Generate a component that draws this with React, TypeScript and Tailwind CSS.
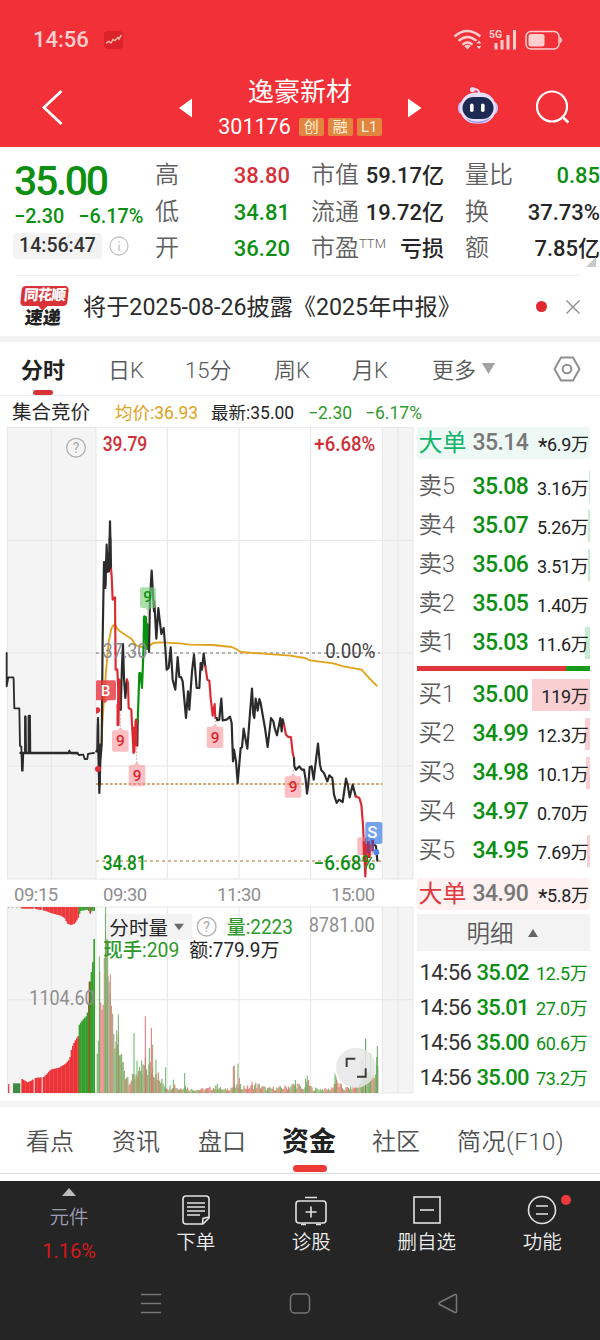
import cn from 'clsx';
import { ReactNode } from 'react';

const quotes = [
  [
    { label: '高', value: '38.80', color: 'text-[#d5303a]' },
    { label: '低', value: '34.81', color: 'text-[#0c8f12]' },
    { label: '开', value: '36.20', color: 'text-[#0c8f12]' },
  ],
  [
    { label: '市值', value: '59.17亿', color: 'text-[#262626]' },
    { label: '流通', value: '19.72亿', color: 'text-[#262626]' },
    { label: '市盈', sup: 'TTM', value: '亏损', color: 'text-[#262626]' },
  ],
  [
    { label: '量比', value: '0.85', color: 'text-[#0c8f12]' },
    { label: '换', value: '37.73%', color: 'text-[#262626]' },
    { label: '额', value: '7.85亿', color: 'text-[#262626]' },
  ],
];

const quoteWidths = ['w-[135px]', 'w-[133px]', 'w-[135px]'];

const sells = [
  { label: '卖5', price: '35.08', amount: '3.16万', bar: 1 },
  { label: '卖4', price: '35.07', amount: '5.26万', bar: 2 },
  { label: '卖3', price: '35.06', amount: '3.51万', bar: 2 },
  { label: '卖2', price: '35.05', amount: '1.40万', bar: 0 },
  { label: '卖1', price: '35.03', amount: '11.6万', bar: 5 },
];

const buys = [
  { label: '买1', price: '35.00', amount: '119万', bar: 58 },
  { label: '买2', price: '34.99', amount: '12.3万', bar: 5 },
  { label: '买3', price: '34.98', amount: '10.1万', bar: 4 },
  { label: '买4', price: '34.97', amount: '0.70万', bar: 0 },
  { label: '买5', price: '34.95', amount: '7.69万', bar: 3 },
];

const ticks = [
  { time: '14:56', price: '35.02', amount: '12.5万' },
  { time: '14:56', price: '35.01', amount: '27.0万' },
  { time: '14:56', price: '35.00', amount: '60.6万' },
  { time: '14:56', price: '35.00', amount: '73.2万' },
];

// chart paths use three units per pixel
const BLACK = '#2b2b2b';
const RED = '#dc2a32';
const GREEN = '#0a920f';

const priceLines = [
  {
    color: BLACK,
    points:
      '289,980 292,975 294,880 295,985 298,1105 301,1010 305,960 308,640 312,412 316,490 320,360 323,440 327,440 330,290 333,430',
  },
  {
    color: RED,
    points:
      '333,430 335,455 338,525 345,518 347,735 352,735 355,800 354,900 358,765 360,770 362,855',
  },
  { color: BLACK, points: '362,855 366,720 369,658 372,760 376,820 381,765' },
  {
    color: RED,
    points:
      '381,765 384,775 386,850 394,855 396,900 401,985 405,930 408,885 410,963 412,963',
  },
  { color: BLACK, points: '412,960 413,885' },
  {
    color: GREEN,
    points: '413,895 418,745 421,745 426,790 430,690 433,575 437,578',
  },
  {
    color: BLACK,
    points:
      '447,682 450,520 455,438 462,560 463,530 469,642 475,550 484,628 491,610 496,670 500,735 506,730 512,668 518,765 526,795 533,697 538,757 543,757 548,770 558,880 564,800 568,855 576,740 582,690 590,790 598,790 602,715 606,735 611,687 616,725',
  },
  {
    color: RED,
    points:
      '616,725 622,765 628,768 632,820 638,873 644,838 646,880 650,880',
  },
  {
    color: BLACK,
    points:
      '650,880 652,887 658,885 660,860 664,822 668,887 680,885 690,876 695,895 699,1010 702,975 708,1010 713,1075 722,970 726,968 731,912 736,940 742,972 750,865 756,792 760,870 763,880 767,822 773,858 778,823 782,835 787,865 795,910 803,967 813,880 820,890 824,910 831,932 841,880 845,920 848,884 852,900',
  },
  {
    color: RED,
    points: '852,900 858,930 864,936 873,938 878,985 882,1000',
  },
  {
    color: BLACK,
    points:
      '882,1000 883,1025 888,1035 898,1025 905,1035 912,1035 917,1065 921,1107 925,1080 929,1027 935,1025 941,1065 948,1005 954,957 960,1020 964,1037 972,1045 977,1058 982,1070 988,1052 997,1060 1002,1110 1010,1135 1017,1125 1028,1132 1034,1090 1038,1062 1043,1080 1049,1118 1058,1080 1067,1115',
  },
  {
    color: RED,
    points:
      '1067,1115 1078,1120 1084,1140 1089,1200 1093,1290 1096,1355 1099,1280 1101,1240',
  },
  {
    color: BLACK,
    points:
      '1101,1245 1104,1270 1107,1295 1111,1260 1116,1238 1121,1258 1128,1265 1132,1308',
  },
];

const averageLine =
  '303,980 310,850 318,740 325,660 334,612 340,602 345,600 352,612 360,620 380,633 395,643 402,655 410,663 430,668 447,665 460,655 480,653 540,656 570,660 640,661 695,667 708,673 722,682 780,686 870,693 915,700 930,707 1000,716 1030,725 1085,735 1100,752 1115,768 1132,785';

const auctionLine =
  '20,685 20,785 25,758 40,758 41,766 43,851 58,851 60,964 64,966 66,1038 68,1038 70,985 76,985 76,875 78,985 86,985 86,873 90,873 91,985 205,985 208,978 212,985 232,986 237,991 250,990 254,1003 262,1003 264,988 272,986 282,985';

// [x, height] knots of the auction volume area
const auctionKnots: [number, number][] = [
  [64, 42], [80, 32], [90, 36], [103, 45], [130, 48], [150, 70], [175, 76],
  [195, 88], [207, 102], [213, 135], [222, 155], [235, 175], [236, 205],
  [245, 218], [256, 230], [263, 250], [268, 335], [273, 370], [277, 400],
  [280, 462],
];

const hangingKnots: [number, number][] = [
  [64, 5], [100, 5], [135, 12], [150, 18], [180, 26], [192, 34], [200, 50],
  [210, 54], [222, 50], [234, 30], [238, 12], [262, 8], [268, 20], [274, 10],
  [280, 12],
];

const volumeKnots: [number, number][] = [
  [290, 118], [293, 125], [297, 366], [301, 260], [307, 240], [311, 400],
  [314, 530], [317, 558], [320, 360], [326, 330], [331, 270], [337, 230],
  [341, 138], [346, 125], [350, 185], [356, 180], [359, 110], [366, 100],
  [374, 75], [382, 55], [395, 45], [410, 80], [420, 55], [430, 90],
  [445, 85], [460, 85], [468, 80], [476, 42], [490, 32], [503, 16],
  [520, 30], [535, 12], [552, 26], [566, 12], [610, 12], [650, 20],
  [670, 10], [695, 20], [720, 22], [745, 18], [765, 28], [800, 14],
  [850, 18], [890, 30], [905, 12], [922, 34], [935, 14], [990, 12],
  [1005, 38], [1030, 14], [1075, 24], [1090, 50], [1125, 72], [1132, 110],
];

const spikes: [number, number, string][] = [
  [298, 410, '#67b562'],
  [317, 558, '#67b562'],
  [323, 500, '#67b562'],
  [331, 355, '#dd8273'],
  [355, 236, '#79ad6b'],
  [350, 188, '#79ad6b'],
  [365, 118, '#79ad6b'],
  [402, 180, '#67b562'],
  [411, 97, '#67b562'],
  [425, 98, '#67b562'],
  [436, 230, '#dd6f75'],
  [448, 135, '#67b562'],
  [454, 195, '#dd6f75'],
  [458, 145, '#a99a73'],
  [468, 100, '#67b562'],
  [497, 77, '#67b562'],
  [520, 40, '#67b562'],
  [554, 60, '#67b562'],
  [652, 28, '#67b562'],
  [700, 80, '#bd8b6d'],
  [703, 82, '#bd8b6d'],
  [714, 88, '#79ad6b'],
  [718, 46, '#dd8273'],
  [756, 34, '#dd8273'],
  [886, 39, '#67b562'],
  [917, 44, '#67b562'],
  [922, 52, '#79ad6b'],
  [1005, 58, '#67b562'],
  [1008, 50, '#67b562'],
  [1086, 100, '#67b562'],
  [1097, 163, '#4f9a4f'],
  [1112, 118, '#67b562'],
  [1130, 108, '#67b562'],
  [1132, 141, '#67a562'],
];

function heightAt(knots: [number, number][], x: number) {
  for (let i = 1; i < knots.length; i++) {
    const [x0, h0] = knots[i - 1];
    const [x1, h1] = knots[i];
    if (x <= x1) return h0 + ((h1 - h0) * (x - x0)) / (x1 - x0);
  }
  return knots[knots.length - 1][1];
}

// small repeatable noise so that neighbouring bars differ
function noise(i: number) {
  const n = Math.sin(i * 12.9898) * 43758.5453;
  return n - Math.floor(n);
}

function volumeColor(x: number, n: number) {
  if (x < 300) return n > 0.5 ? '#8fbb7c' : '#c59a80';
  if (x < 311) return '#e88683';
  if (x < 342) return '#b3a587';
  if (n > 0.66) return '#e0867c';
  return n > 0.3 ? '#85b772' : '#b79a76';
}

const volumeBars = Array.from({ length: 240 }, (_, i) => {
  const x = 290 + i * 3.52;
  const rough = x < 345 ? 1 : 0.45 + noise(i) * 0.8;
  return {
    x,
    height: heightAt(volumeKnots, x) * rough,
    color: volumeColor(x, noise(i + 500)),
  };
});

const auctionBars = Array.from({ length: 55 }, (_, i) => 64 + i * 4).filter(
  x => x !== 100 && x !== 124,
);

function Grid({ top, bottom, rows }: { top: number; bottom: number; rows: number[] }) {
  return (
    <>
      <rect x="22" y={top} width="266" height={bottom - top} fill="#f4f4f4" />
      <rect x="1147" y={top} width="92" height={bottom - top} fill="#f4f4f4" />
      <g stroke="#e6e6e6" strokeWidth="3">
        {rows.map(y => (
          <path key={y} d={`M22 ${y}H1239`} />
        ))}
        {[22, 154, 288, 502, 717, 932, 1147, 1194, 1239].map(x => (
          <path key={x} d={`M${x} ${top}V${bottom}`} />
        ))}
      </g>
    </>
  );
}

interface LabelProps {
  x: number;
  y: number;
  width: number;
  fill: string;
  weight?: number;
  children: ReactNode;
}

function Label({ x, y, width, fill, weight = 500, children }: LabelProps) {
  return (
    <text
      x={x}
      y={y}
      fontSize="58"
      fontWeight={weight}
      fill={fill}
      textLength={width}
      lengthAdjust="spacingAndGlyphs">
      {children}
    </text>
  );
}

function Nine({ x, y }: { x: number; y: number }) {
  return (
    <g>
      <path
        d={`M${x - 19} ${y - 30}h10l9 -9l9 9h10q6 0 6 6v52q0 6 -6 6h-38q-6 0 -6 -6v-52q0 -6 6 -6z`}
        fill="#f5828a"
        fillOpacity="0.5"
      />
      <text
        x={x}
        y={y + 18}
        fontSize="46"
        fontWeight="500"
        textAnchor="middle"
        fill="#d9252f">
        9
      </text>
    </g>
  );
}

function Help({ x, y }: { x: number; y: number }) {
  return (
    <g>
      <circle cx={x} cy={y} r="28" fill="none" stroke="#b4b4b4" strokeWidth="4" />
      <text x={x} y={y + 15} fontSize="42" textAnchor="middle" fill="#a8a8a8">
        ?
      </text>
    </g>
  );
}

function PriceChart() {
  return (
    <svg width="414" height="454" viewBox="0 7 1242 1362" className="block">
      <Grid top={7} bottom={1363} rows={[8, 347, 685, 1024, 1363]} />
      <path d="M288 685H1140" stroke="#77737f" strokeWidth="3" strokeDasharray="9 9" />
      <path d="M288 1078H1147" stroke="#c08a3a" strokeWidth="4" strokeDasharray="8 6" />
      <path d="M288 1309H1147" stroke="#c5a276" strokeWidth="4" strokeDasharray="9 9" />
      <polyline
        points={averageLine}
        fill="none"
        stroke="#e2a21a"
        strokeWidth="5.5"
        strokeLinejoin="round"
      />
      <g strokeWidth="6.5" fill="none" strokeLinejoin="round" strokeLinecap="round">
        <polyline points={auctionLine} stroke={BLACK} strokeWidth="5.5" />
        <path d="M62 985H206M212 985H232" stroke={BLACK} strokeWidth="8" />
        <path d="M76 876V980M87 875V980" stroke={BLACK} strokeWidth="7" />
        <path d="M435 580V640M440 600V670" stroke={GREEN} strokeWidth="13" />
        {priceLines.map(line => (
          <polyline key={line.points} points={line.points} stroke={line.color} />
        ))}
        <path d="M322 385V440M315 415V480" stroke={BLACK} strokeWidth="9" />
        <path d="M330 340V430" stroke={BLACK} strokeWidth="8" />
        <path d="M294 900V980M299 960V1080" stroke={BLACK} strokeWidth="7" />
        <path d="M357 768V850M354 840V900M408 890V960M402 910V980" stroke={RED} strokeWidth="9" />
      </g>
      <Label x={308} y={700} width={134} fill="#8c8c8c" weight={400}>37.30</Label>
      <path
        d="M292 767h50q6 0 6 6v48q0 6 -6 6h-18l-9 9l-9 -9h-18v-54q0 -6 4 -6z"
        fill="#e5373f"
        fillOpacity="0.82"
      />
      <text x="317" y="813" fontSize="46" fontWeight="500" textAnchor="middle" fill="#fff">
        B
      </text>
      <path d="M288 849c8 -3 14 2 13 10q-4 8 -13 8z" fill="#e03038" />
      <circle cx="294" cy="1033" r="9" fill="#e03038" />
      <path
        d="M426 488h36q6 0 6 6v50q0 6 -6 6h-10l-8 10l-8 -10h-10q-6 0 -6 -6v-50q0 -6 6 -6z"
        fill="#7ccf80"
        fillOpacity="0.65"
      />
      <text x="443" y="533" fontSize="46" fontWeight="500" textAnchor="middle" fill="#0a920f">
        9
      </text>
      <path
        d="M361 870V912M410 970V1016M444 562V600M646 888V900M880 1035V1046"
        stroke="#d99aa0"
        strokeWidth="3"
        strokeDasharray="5 5"
      />
      <Nine x={361} y={947} />
      <Nine x={411} y={1051} />
      <Nine x={645} y={936} />
      <Nine x={879} y={1085} />
      <rect x="1072" y="1238" width="48" height="54" rx="6" fill="#f5828a" fillOpacity="0.55" />
      <path d="M1092 1250V1290M1099 1240V1320M1108 1256V1300" stroke={RED} strokeWidth="8" />
      <path
        d="M1102 1192h39q6 0 6 6v54q0 6 -6 6h-14l-10 9l-9 -9h-12v-60q0 -6 6 -6z"
        fill="#5b93ea"
        fillOpacity="0.85"
      />
      <path d="M1118 1246V1280M1105 1250V1285" stroke="#7a3f86" strokeWidth="8" />
      <text x="1117" y="1240" fontSize="50" fontWeight="500" textAnchor="middle" fill="#fff">
        S
      </text>
      <circle cx="1129" cy="1283" r="9" fill="#4f86e8" />
      <Help x={228} y={69} />
      <Label x={308} y={79} width={134} fill="#cf3038">39.79</Label>
      <Label x={943} y={79} width={183} fill="#cf3038">+6.68%</Label>
      <Label x={976} y={700} width={150} fill="#444" weight={400}>0.00%</Label>
      <Label x={308} y={1336} width={132} fill="#0c8f12">34.81</Label>
      <Label x={941} y={1336} width={185} fill="#0c8f12">−6.68%</Label>
    </svg>
  );
}

function VolumeChart() {
  return (
    <svg width="414" height="188" viewBox="0 77 1242 564" className="block">
      <Grid top={80} bottom={638} rows={[80, 358, 638]} />
      <path d="M24 82H64" stroke="#b9b9b9" strokeWidth="4" strokeDasharray="4 8" />
      {auctionBars.map(x => (
        <rect
          key={`TOP-${x}`}
          x={x}
          y="80"
          width="5"
          height={heightAt(hangingKnots, x)}
          fill={x < 236 || x === 268 ? '#ee3a3e' : '#3aa536'}
        />
      ))}
      <rect x="24" y="611" width="4" height="27" fill="#e8474a" />
      <rect x="39" y="609" width="22" height="29" fill="#3f8a45" />
      {auctionBars.map(x => (
        <rect
          key={`AUCTION-${x}`}
          x={x}
          y={638 - heightAt(auctionKnots, x)}
          width="5"
          height={heightAt(auctionKnots, x)}
          fill={x < 235 ? '#ec3339' : '#36a02c'}
        />
      ))}
      <path d="M268 304V638" stroke="#a0522d" strokeWidth="4" />
      <Label x={88} y={375} width={196} fill="#8f8f8f" weight={400}>1104.60</Label>
      {volumeBars.map(bar => (
        <rect
          key={bar.x}
          x={bar.x}
          y={638 - bar.height}
          width="3.9"
          height={bar.height}
          fill={bar.color}
        />
      ))}
      {spikes.map(([x, height, color]) => (
        <rect
          key={`SPIKE-${x}`}
          x={x - 1.5}
          y={638 - height}
          width="3"
          height={height}
          fill={color}
        />
      ))}
      <rect x="318" y="100" width="259" height="78" rx="6" fill="#f2f2f2" fillOpacity="0.92" />
      <Label x={328} y={164} width={176} fill="#262626" weight={400}>分时量</Label>
      <path d="M522 130H552L537 150Z" fill="#6a6a6a" />
      <Help x={620} y={139} />
      <Label x={680} y={162} width={199} fill="#2f9a2b" weight={450}>量:2223</Label>
      <Label x={310} y={229} width={228} fill="#2f9a2b" weight={450}>现手:209</Label>
      <Label x={568} y={229} width={270} fill="#262626" weight={400}>额:779.9万</Label>
      <Label x={926} y={154} width={198} fill="#8f8f8f" weight={400}>8781.00</Label>
      <circle cx="1068" cy="562" r="60" fill="#e6e6e6" fillOpacity="0.85" />
      <path d="M1040 560V535H1066M1097 564V589H1071" fill="none" stroke="#3c3c3c" strokeWidth="6" />
    </svg>
  );
}

function StatusBar() {
  return (
    <div className="flex h-[72px] items-center pt-[7px] pl-[33px] text-[#ffcfd0]">
      <span className="w-[71px] text-[22px] font-medium">14:56</span>
      <svg width="20" height="20" viewBox="0 0 20 20">
        <rect width="19" height="18" rx="4" y="1" fill="#da232a" />
        <path
          d="M2 13L5 11.500L7 13L9 9.500L11 10.500L14 7.500L15 9L17.500 5"
          fill="none"
          stroke="#f5b0a2"
          strokeWidth="1.500"
        />
      </svg>
      <svg width="114" height="24" viewBox="0 0 114 24" className="ml-[328px]">
        <g fill="none" stroke="#ffcfd0" strokeWidth="2.400">
          <path d="M2.500 8.500Q15 -2.500 28.500 8.500" />
          <path d="M6.500 12.800Q15.500 5 24.500 12.800" />
          <path d="M10.500 16.600Q15.500 12.500 20.500 16.600" />
        </g>
        <path d="M12.300 18Q15.500 15.500 18.700 18L15.500 21.500Z" fill="#ffcfd0" />
        <path d="M24.500 15.500L27 12.500L29.500 15.500ZM24.500 18L27 21L29.500 18Z" fill="#ffcfd0" />
        <text x="37" y="9.500" fontSize="10.500" fontWeight="700" fill="#ffcfd0">5G</text>
        <path d="M44 21.500V15M50 21.500V12M56 21.500V7M62.500 21.500V2" stroke="#ffcfd0" strokeWidth="3" />
        <rect x="74" y="3.500" width="33" height="17.500" rx="5" fill="none" stroke="#ffcfd0" strokeWidth="1.500" />
        <rect x="76.500" y="6" width="16" height="12.500" rx="2.500" fill="#ffcfd0" />
        <path d="M108.500 9.500Q110.500 12 108.500 15Z" fill="#ffcfd0" stroke="#ffcfd0" />
      </svg>
    </div>
  );
}

function Robot() {
  return (
    <svg width="42" height="42" viewBox="0 0 42 42">
      <path d="M15 5Q22 2 22.500 10" fill="none" stroke="#f3e6fb" strokeWidth="2" />
      <circle cx="15.500" cy="4.500" r="2.600" fill="#f0d8f0" />
      <ellipse cx="4.500" cy="23" rx="3.500" ry="6" fill="#c9c3f5" />
      <ellipse cx="37.500" cy="23" rx="3.500" ry="6" fill="#c9c3f5" />
      <rect x="3" y="7.500" width="36" height="31" rx="15.500" fill="#e9defa" />
      <path d="M8 32Q20 41 34 32Q30 38.500 21 38.500Q12 38.500 8 32Z" fill="#a9a2ee" />
      <rect x="5.500" y="12" width="31" height="22" rx="11" fill="#1e2a52" />
      <rect x="13" y="18.500" width="3.600" height="8.500" rx="1.800" fill="#fff" />
      <rect x="24" y="18.500" width="3.600" height="8.500" rx="1.800" fill="#fff" />
    </svg>
  );
}

function Header() {
  return (
    <div className="flex h-[75px] items-center text-white">
      <svg width="24" height="40" viewBox="0 0 24 40" className="-mt-2 ml-[41px]">
        <path d="M20.500 5L3 21.500L20.500 38" fill="none" stroke="#fff" strokeWidth="2.800" />
      </svg>
      <svg width="14" height="20" viewBox="0 0 14 20" className="-mt-1 ml-[113px]">
        <path d="M14 0.500V19.500L1 10Z" fill="#fff" />
      </svg>
      <div className="ml-[26px] flex w-[164px] flex-col items-center">
        <h1 className="text-[26px] leading-[34px]">逸豪新材</h1>
        <div className="mt-px flex items-center">
          <span className="mr-2 text-[21.500px] leading-[34px] font-[450]">301176</span>
          <div className="flex gap-1 text-[15px] leading-[18px]">
            {['创', '融', 'L1'].map(tag => (
              <span
                key={tag}
                className="h-[18px] w-[25px] rounded-xs bg-[#e2863f] text-center text-[#fff3dc]">
                {tag}
              </span>
            ))}
          </div>
        </div>
      </div>
      <svg width="14" height="20" viewBox="0 0 14 20" className="-mt-1 ml-[26px]">
        <path d="M0 0.500V19.500L13.500 10Z" fill="#fff" />
      </svg>
      <div className="-mt-2 ml-[35px]">
        <Robot />
      </div>
      <svg width="36" height="36" viewBox="0 0 36 36" className="-mt-1 ml-9">
        <circle cx="17" cy="16.500" r="15" fill="none" stroke="#fff" strokeWidth="2.200" />
        <path d="M27 26.500L33.500 32.500" stroke="#fff" strokeWidth="2.600" />
      </svg>
    </div>
  );
}

function Quote() {
  return (
    <div className="flex h-32">
      <div className="w-[155px] pl-3.5 text-[#0c8f12]">
        <div className="mt-[9px] h-[50px] text-[41px] leading-[50px] font-medium tracking-[-2.400px]">
          35.00
        </div>
        <div className="flex h-[23px] gap-[14px] text-[19.800px] leading-[22px] font-medium whitespace-nowrap">
          <span>−2.30</span>
          <span>−6.17%</span>
        </div>
        <div className="mt-1 -ml-px flex items-center">
          <span className="h-[26px] w-[89px] rounded-sm bg-[#f3f3f3] text-center text-[19.500px] leading-[26px] font-medium text-[#333]">
            14:56:47
          </span>
          <svg width="20" height="20" viewBox="0 0 20 20" className="ml-[7px]">
            <circle cx="10" cy="10" r="9" fill="none" stroke="#c4c4c4" strokeWidth="1.300" />
            <path d="M10 8.500V15M10 5.200V6.800" stroke="#c4c4c4" strokeWidth="1.400" />
          </svg>
        </div>
      </div>
      {quotes.map((column, i) => (
        <div
          key={column[0].label}
          className={cn('flex flex-col pt-[10px]', quoteWidths[i], i === 1 && 'mx-[21px]')}>
          {column.map(item => (
            <div
              key={item.label}
              className="flex h-[36.500px] items-center justify-between whitespace-nowrap">
              <span className="text-[24px] font-[350] text-[#5f5f5f]">
                {item.label}
                {item.sup && <sup className="top-[-0.600em] text-[13px]">{item.sup}</sup>}
              </span>
              <span className={cn('pt-px text-[22px] font-medium', item.color)}>{item.value}</span>
            </div>
          ))}
        </div>
      ))}
    </div>
  );
}

function Notice() {
  return (
    <div className="flex h-[61px] items-center">
      <div className="ml-[21px] w-12">
        <div className="relative h-[20px] w-[47px] -skew-x-6 rounded-sm bg-[#d9333a] text-center text-[14.500px] leading-[20px] font-black tracking-[-0.800px] text-white">
          同花顺
          <i className="absolute -bottom-[3px] left-[19px] size-2 rotate-45 bg-[#d9333a]" />
        </div>
        <div className="mt-0.5 -skew-x-6 pr-1 text-center text-[18px] leading-5 font-black text-[#222]">
          速递
        </div>
      </div>
      <p className="mt-0.5 ml-[14px] w-[453px] text-[23.200px] font-[380] whitespace-nowrap text-[#2b2b2b]">
        将于2025-08-26披露《2025年中报》
      </p>
      <span className="size-[11px] rounded-full bg-[#e0282e]" />
      <svg width="14" height="14" viewBox="0 0 14 14" className="ml-[19px]">
        <path d="M0.500 0.500L13.500 13.500M13.500 0.500L0.500 13.500" stroke="#8d8d8d" strokeWidth="1.400" />
      </svg>
    </div>
  );
}

function PeriodTabs() {
  return (
    <div className="flex h-[54px] items-center border-b border-[#ededed] pt-[3px] text-[22px] font-[350] whitespace-nowrap text-[#5a5a5a]">
      <div className="relative ml-[21px] w-[87px] font-bold text-[#222]">
        分时
        <span className="absolute top-[36px] left-3 h-[5px] w-5 rounded-full bg-[#d9333a]" />
      </div>
      <span className="w-[77px]">日K</span>
      <span className="w-[89px]">15分</span>
      <span className="w-[78px]">周K</span>
      <span className="w-[80px]">月K</span>
      <span className="w-[50px]">更多</span>
      <svg width="13" height="11" viewBox="0 0 13 11" className="-mt-1">
        <path d="M0 0H13L6.500 11Z" fill="#a3a3a3" />
      </svg>
      <svg width="28" height="26" viewBox="0 0 28 26" className="-mt-[3px] ml-[58px]">
        <path
          d="M8 1.500H20L26.500 13L20 24.500H8L1.500 13Z"
          fill="none"
          stroke="#8f8f8f"
          strokeWidth="2"
          strokeLinejoin="round"
        />
        <circle cx="14" cy="13" r="4.300" fill="none" stroke="#8f8f8f" strokeWidth="2" />
      </svg>
    </div>
  );
}

function BigOrder({ price, amount, sell }: { price: string; amount: string; sell?: boolean }) {
  return (
    <div
      className={cn(
        'flex h-[32px] items-center rounded-sm',
        sell ? 'bg-[#eef9f5] text-[#13b56c]' : 'bg-[#fdf1f1] text-[#e0383f]',
      )}>
      <span className="w-[56px] pl-[2px] text-[24px] whitespace-nowrap">大单</span>
      <span className="w-[58px] pt-px text-[23px] font-medium tracking-[-0.600px] text-[#777]">
        {price}
      </span>
      <span className="flex-1 pt-0.5 pr-px text-right text-[18px] tracking-[-0.400px] whitespace-nowrap text-[#222]">
        <span className="text-[22px] leading-[18px] align-[-3px]">*</span>
        {amount}
      </span>
    </div>
  );
}

function OrderRow({ order, sell }: { order: (typeof sells)[0]; sell?: boolean }) {
  return (
    <div className="flex h-[39px] items-center">
      <span className="w-[56px] pt-px pl-[2px] text-[23.500px] font-[350] whitespace-nowrap text-[#5a5a5a]">
        {order.label}
      </span>
      <span className="w-[59px] pt-px text-[23px] font-medium tracking-[-0.600px] text-[#0c8f12]">
        {order.price}
      </span>
      <span className="relative flex h-8 flex-1 items-center justify-end pt-[3px] pr-px text-[18px] tracking-[-0.300px] whitespace-nowrap text-[#222]">
        <i
          className={cn('absolute top-0 right-0 h-8', sell ? 'bg-[#c9ebcf]' : 'bg-[#f9cfd1]')}
          style={{ width: order.bar }}
        />
        <span className="relative">{order.amount}</span>
      </span>
    </div>
  );
}

function OrderBook() {
  return (
    <div className="ml-[2.500px] w-[173px]">
      <BigOrder price="35.14" amount="6.9万" sell />
      <div className="mt-2">
        {sells.map(order => (
          <OrderRow key={order.label} order={order} sell />
        ))}
      </div>
      <div className="mt-[4px] flex h-[5px]">
        <div className="w-[149px] bg-[#e0353a]" />
        <div className="flex-1 bg-[#159a1b]" />
      </div>
      <div className="mt-[4px]">
        {buys.map(order => (
          <OrderRow key={order.label} order={order} />
        ))}
      </div>
      <div className="mt-[8px]">
        <BigOrder price="34.90" amount="5.8万" />
      </div>
      <div className="mt-1 flex h-[37px] items-center bg-[#f3f3f3] pl-[50px]">
        <span className="pt-1 text-[23.500px] font-[350] text-[#5a5a5a]">明细</span>
        <svg width="10" height="8" viewBox="0 0 10 8" className="ml-[14px]">
          <path d="M0 8H10L5 0Z" fill="#666" />
        </svg>
      </div>
      <div className="mt-[4px]">
        {ticks.map((tick, i) => (
          <div key={i} className="flex h-[35px] items-center whitespace-nowrap">
            <span className="w-[60px] pl-[3px] text-[22px] tracking-[-0.600px] text-[#333]">
              {tick.time}
            </span>
            <span className="w-[54px] text-[22px] font-medium tracking-[-0.800px] text-[#0c8f12]">
              {tick.price}
            </span>
            <span className="flex-1 pt-px pr-[2px] text-right text-[18px] tracking-[-0.300px] text-[#0c8f12]">
              {tick.amount}
            </span>
          </div>
        ))}
      </div>
    </div>
  );
}

function DetailTabs() {
  return (
    <div className="flex h-[67px] items-center border-b border-[#dedede] pt-1 text-[24px] font-[350] whitespace-nowrap text-[#505050]">
      <span className="ml-[26px] w-[86px]">看点</span>
      <span className="w-[86px]">资讯</span>
      <span className="w-[84px]">盘口</span>
      <div className="relative w-[90px] text-[27px] font-bold text-[#222]">
        资金
        <span className="absolute top-[43px] left-[11px] h-[7px] w-[34px] rounded-full bg-[#ec3a36]" />
      </div>
      <span className="w-[85px]">社区</span>
      <span className="tracking-[0.500px]">简况(F10)</span>
    </div>
  );
}

function BottomItem({ label, children }: { label: string; children: ReactNode }) {
  return (
    <div className="flex w-[115.500px] flex-col items-center">
      <svg
        width="36"
        height="32"
        viewBox="0 0 36 32"
        fill="none"
        stroke="#e2e2e2"
        strokeWidth="1.600"
        className="mt-[13px]">
        {children}
      </svg>
      <span className="mt-0.5 text-[19.500px] leading-[30px] font-[350] text-[#ededed]">{label}</span>
    </div>
  );
}

function BottomBar() {
  return (
    <div className="h-[159px] bg-[#252525]">
      <div className="flex h-[100px]">
        <div className="flex w-[138px] flex-col items-center">
          <svg width="14" height="8" viewBox="0 0 14 8" className="mt-[7px]">
            <path d="M0 8H14L7 0Z" fill="#bdbdbd" />
          </svg>
          <span className="mt-[7px] text-[19.500px] leading-[30px] font-[350] text-[#9c9cb2]">元件</span>
          <span className="mt-[3px] text-[20px] leading-[30px] text-[#d4191c]">1.16%</span>
        </div>
        <BottomItem label="下单">
          <path d="M8 2H28Q31 2 31 5V24L25 30H8Q5 30 5 27V5Q5 2 8 2Z" />
          <path d="M31 23L25 24.500L24.500 30M9 9H27M9 13H27M9 17H27M9 21H22" />
        </BottomItem>
        <BottomItem label="诊股">
          <rect x="3" y="7" width="30" height="22" rx="3" />
          <path d="M12 3.500H24M18 12.500V23.500M12.500 18H23.500M8 30.500H13M23 30.500H28" />
        </BottomItem>
        <BottomItem label="删自选">
          <rect x="5" y="3" width="26" height="26" />
          <path d="M11 16H25" />
        </BottomItem>
        <BottomItem label="功能">
          <circle cx="18" cy="16" r="13.500" />
          <path d="M12 12H24M12 20H24" />
        </BottomItem>
        <span className="mt-[14px] -ml-[39px] size-[10px] rounded-full bg-[#ee3a3a]" />
      </div>
      <div className="flex pt-3 text-[#777]">
        <svg width="22" height="22" viewBox="0 0 22 22" className="ml-[140px]">
          <path d="M1 1.500H21M1 10.500H21M1 19.500H21" stroke="currentColor" strokeWidth="1.500" />
        </svg>
        <svg width="22" height="22" viewBox="0 0 22 22" className="ml-[127px]">
          <rect x="1.500" y="1" width="19" height="19" rx="4" fill="none" stroke="currentColor" strokeWidth="1.500" />
        </svg>
        <svg width="22" height="22" viewBox="0 0 22 22" className="ml-[126px]">
          <path
            d="M18 1.500L2.500 9.500Q1 10.500 2.500 11.500L18 19.500Q19.500 20 19.500 18.500V2.500Q19.500 1 18 1.500Z"
            fill="none"
            stroke="currentColor"
            strokeWidth="1.500"
          />
        </svg>
      </div>
    </div>
  );
}

export default function App() {
  return (
    <div className="h-[1340px] w-[600px] overflow-hidden bg-white [font-family:Roboto,'Noto_Sans_CJK_SC',sans-serif]">
      <div className="bg-[#f23037]">
        <StatusBar />
        <Header />
      </div>
      <div className="relative">
        <Quote />
        <svg width="10" height="10" className="absolute top-[110px] right-1">
          <path d="M10 0V10H0Z" fill="#c8c8c8" />
        </svg>
      </div>
      <div className="ml-4 h-px w-[564px] bg-[#f0f0f0]" />
      <Notice />
      <div className="-mt-px h-1.5 bg-[#f3f3f3]" />
      <PeriodTabs />
      <div className="flex h-[31px] items-center pt-[3px] whitespace-nowrap text-[#262626]">
        <span className="ml-3 w-[103px] text-[19.500px]">集合竞价</span>
        <span className="w-[96px] text-[17.500px] text-[#dfa21b]">均价:36.93</span>
        <span className="w-[97px] text-[17.500px]">最新:35.00</span>
        <span className="w-[57px] text-[17.500px] text-[#2f9a2b]">−2.30</span>
        <span className="text-[17.500px] text-[#2f9a2b]">−6.17%</span>
      </div>
      <div className="flex h-[674px]">
        <div className="w-[414px]">
          <PriceChart />
          <div className="flex h-[25px] items-center pt-[2px] text-[18.500px] leading-[22px] tracking-tight text-[#8f8f8f]">
            <span className="ml-[14px] w-[89px]">09:15</span>
            <span className="w-[114px]">09:30</span>
            <span className="w-[114px]">11:30</span>
            <span>15:00</span>
          </div>
          <VolumeChart />
        </div>
        <OrderBook />
      </div>
      <div className="h-1.5 bg-[#f3f3f3]" />
      <DetailTabs />
      <div className="h-[7px]" />
      <BottomBar />
    </div>
  );
}
